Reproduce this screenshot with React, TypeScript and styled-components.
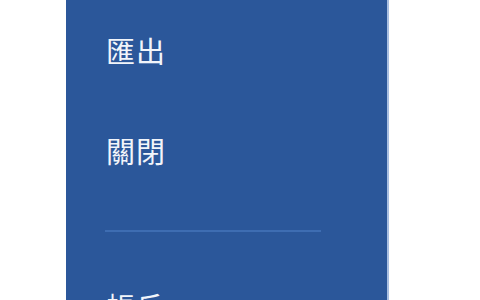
import React from "react";
import styled, { createGlobalStyle } from "styled-components";

const GlobalStyle = createGlobalStyle`
  html, body {
    margin: 0;
    padding: 0;
    background: #ffffff;
  }
`;

const menuItems = ["匯出", "關閉"];

const App = () => {
  return (
    <>
      <GlobalStyle />
      <PageContainer>
        <BackstagePanel>
          {menuItems.map((label) => (
            <MenuItem key={label}>{label}</MenuItem>
          ))}
          <Divider />
          <MenuItem>帳戶</MenuItem>
          <MenuItem>選項</MenuItem>
        </BackstagePanel>
      </PageContainer>
    </>
  );
};

const PageContainer = styled.div`
  width: 480px;
  height: 300px;
  overflow: hidden;
  background: #ffffff;
`;

const BackstagePanel = styled.nav`
  margin-left: 66px;
  width: 323px;
  height: 300px;
  box-sizing: border-box;
  background: #2b579a;
  border-right: 2px solid #a9bfe2;
  display: flex;
  flex-direction: column;
  overflow: hidden;
`;

const MenuItem = styled.div`
  flex: 0 0 100px;
  height: 100px;
  display: flex;
  align-items: center;
  padding-left: 40px;
  color: #f2f5fa;
  font-family: "Noto Sans CJK TC", "Noto Sans", sans-serif;
  font-size: 29px;
  font-weight: 400;
  letter-spacing: 1px;
`;

const Divider = styled.div`
  flex: 0 0 2px;
  width: 216px;
  margin: 30px 0 24px 39px;
  background: #3e6db2;
`;

export default App;
